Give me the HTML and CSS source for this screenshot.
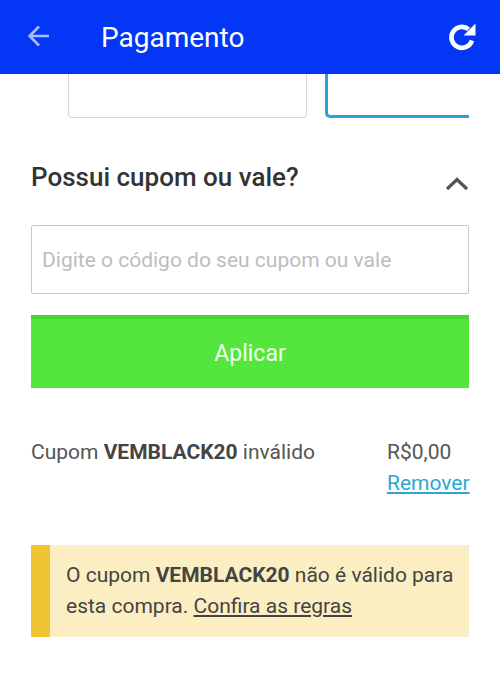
FILE: index.html
```html
<!DOCTYPE html>
<html lang="pt-BR">
<head>
    <meta charset="UTF-8">
    <meta name="viewport" content="width=device-width, initial-scale=1.0">
    <title>Pagamento</title>
    <link rel="stylesheet" href="styles.css">
</head>
<body>
    <header class="topbar">
        <a class="topbar-back" href="#" aria-label="Voltar">
            <svg width="24" height="24" viewBox="0 0 24 24"><path d="M22 12H3M12 2.5L2.6 12l9.4 9.5" fill="none" stroke="currentColor" stroke-width="2.6"/></svg>
        </a>
        <h1 class="topbar-title">Pagamento</h1>
        <a class="topbar-refresh" href="#" aria-label="Atualizar">
            <svg width="32" height="30" viewBox="0 0 32 30">
                <path d="M22.6 8.2 A10.5 10.5 0 1 0 26 19.5" fill="none" stroke="currentColor" stroke-width="4.6"/>
                <polygon points="29.5,2.5 29.5,14.5 17.5,14.5" fill="currentColor"/>
            </svg>
        </a>
    </header>

    <main class="page">
        <div class="card-fields">
            <div class="field-box"></div>
            <div class="field-box field-box--active"></div>
        </div>

        <section class="coupon">
            <div class="coupon-head">
                <h2>Possui cupom ou vale?</h2>
                <svg class="coupon-toggle" width="24" height="14" viewBox="0 0 24 14"><path d="M2 12 L12 2.5 L22 12" fill="none" stroke="#555" stroke-width="3.2"/></svg>
            </div>

            <input class="coupon-input" type="text" placeholder="Digite o código do seu cupom ou vale">
            <button class="coupon-apply" type="button">Aplicar</button>

            <div class="coupon-result">
                <p>Cupom <b>VEMBLACK20</b> inválido</p>
                <div class="coupon-value">
                    <span>R$0,00</span>
                    <a href="#">Remover</a>
                </div>
            </div>

            <div class="alert">
                O cupom <b>VEMBLACK20</b> não é válido para esta compra. <a href="#">Confira as regras</a>
            </div>
        </section>
    </main>
</body>
</html>
```

FILE: styles.css
```css
body {
    margin: 0;
    padding: 0;
    font-family: Roboto, "Noto Sans", Arial, sans-serif;
    background: #fff;
    color: #333;
}
.topbar {
    height: 74px;
    background: #0336f5;
    color: #fff;
    display: flex;
    align-items: center;
    padding: 0 22px 0 27px;
}
.topbar-back {
    color: #adbcfb;
    display: flex;
    margin-top: -2px;
}
.topbar-title {
    margin: 0 0 0 50px;
    font-size: 28px;
    font-weight: 400;
    flex: 1;
}
.topbar-refresh {
    color: #fff;
    display: flex;
    margin-top: -2px;
}
.page {
    padding: 0 31px;
}
.card-fields {
    display: flex;
    gap: 18px;
    height: 44px;
    padding-left: 37px;
    overflow: hidden;
}
.field-box {
    width: 237px;
    flex: none;
    border: 1px solid #d6d6d6;
    border-top: none;
    border-radius: 0 0 4px 4px;
}
.field-box--active {
    width: 200px;
    border: 3px solid #2aa2d3;
    border-top: none;
    border-right: none;
    border-radius: 0 0 0 5px;
}
.coupon-head {
    display: flex;
    align-items: flex-start;
    justify-content: space-between;
    margin-top: 44px;
}
.coupon-head h2 {
    margin: 0;
    font-size: 26px;
    line-height: 30px;
    font-weight: 500;
    color: #333;
}
.coupon-toggle {
    margin-top: 15px;
}
.coupon-input {
    display: block;
    box-sizing: border-box;
    width: 100%;
    height: 69px;
    margin-top: 33px;
    padding: 0 10px;
    border: 1px solid #c8c8c8;
    border-radius: 2px;
    font-family: inherit;
    font-size: 21px;
    color: #333;
}
.coupon-input::placeholder {
    color: #bdbdbd;
}
.coupon-apply {
    display: block;
    width: 100%;
    height: 73px;
    margin-top: 21px;
    border: none;
    border-top: 4px solid #49d432;
    background: #55e63d;
    color: #f2fff0;
    font-family: inherit;
    font-size: 23px;
    cursor: pointer;
}
.coupon-result {
    display: flex;
    justify-content: space-between;
    margin-top: 52px;
    font-size: 21px;
    line-height: 25px;
    color: #555;
}
.coupon-result p {
    margin: 0;
}
.coupon-result b {
    color: #444;
}
.coupon-value {
    display: flex;
    flex-direction: column;
    gap: 6px;
    width: 82px;
}
.coupon-value a {
    color: #2aa7d2;
}
.alert {
    margin-top: 49px;
    background: #fbeec2;
    border-left: 19px solid #f0c533;
    padding: 15px 10px 15px 16px;
    font-size: 21px;
    line-height: 31px;
    color: #444;
}
.alert a {
    color: #444;
}
```
